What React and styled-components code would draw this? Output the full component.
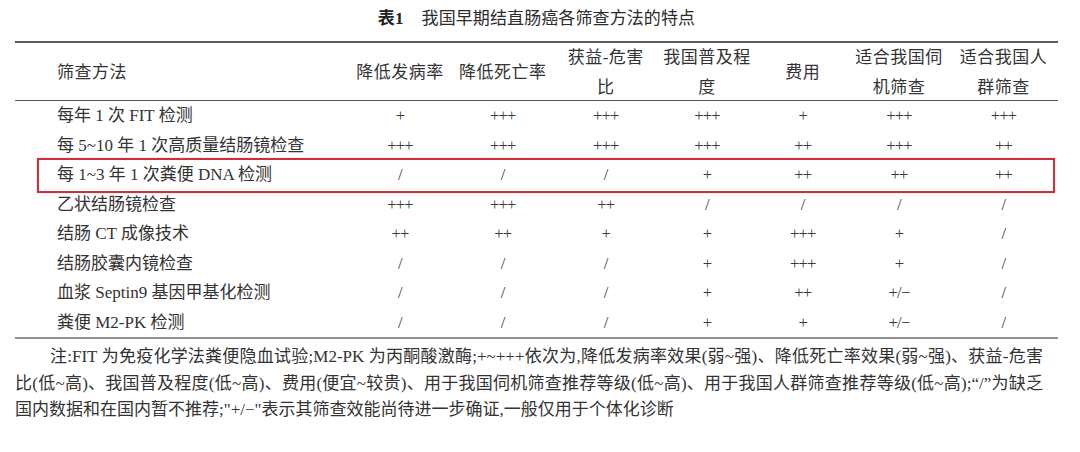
import styled, { createGlobalStyle } from "styled-components";

const GlobalStyle = createGlobalStyle`
  html, body {
    margin: 0;
    padding: 0;
    background: #ffffff;
  }
  body {
    font-family: "Liberation Serif", "Noto Sans CJK SC", serif;
    color: #333333;
  }
`;

const COLS = "333.5px 103px 102.5px 103.5px 99px 92.5px 100px 109px";

const headers = [
  ["降低发病率"],
  ["降低死亡率"],
  ["获益-危害", "比"],
  ["我国普及程", "度"],
  ["费用"],
  ["适合我国伺", "机筛查"],
  ["适合我国人", "群筛查"],
];

const rows = [
  ["每年 1 次 FIT 检测", ["+", "+++", "+++", "+++", "+", "+++", "+++"]],
  ["每 5~10 年 1 次高质量结肠镜检查", ["+++", "+++", "+++", "+++", "++", "+++", "++"]],
  ["每 1~3 年 1 次粪便 DNA 检测", ["/", "/", "/", "+", "++", "++", "++"], true],
  ["乙状结肠镜检查", ["+++", "+++", "++", "/", "/", "/", "/"]],
  ["结肠 CT 成像技术", ["++", "++", "+", "+", "+++", "+", "/"]],
  ["结肠胶囊内镜检查", ["/", "/", "/", "+", "+++", "+", "/"]],
  ["血浆 Septin9 基因甲基化检测", ["/", "/", "/", "+", "++", "+/−", "/"]],
  ["粪便 M2-PK 检测", ["/", "/", "/", "+", "+", "+/−", "/"]],
];

const Page = styled.div`
  width: 1043px;
  padding: 0 22px 0 15px;
`;

const Caption = styled.div`
  height: 41px;
  display: flex;
  justify-content: center;
  align-items: center;
  padding-bottom: 8px;
  box-sizing: border-box;
  font-size: 17px;
  letter-spacing: 0.1px;
  color: #2b2b2b;
`;

const CaptionLabel = styled.span`
  font-weight: bold;
  margin-right: 18px;
  color: #222;
`;

const Table = styled.div`
  border-top: 2px solid #5a5a5a;
  border-bottom: 2px solid #8f8f8f;
`;

const HeadRow = styled.div`
  display: grid;
  grid-template-columns: ${COLS};
  height: 57px;
  align-items: center;
  border-bottom: 1.5px solid #555;
`;

const HeadCell = styled.div`
  font-size: 17px;
  line-height: 30px;
  letter-spacing: 0.5px;
  text-align: ${(p) => (p.$first ? "left" : "center")};
  padding-left: ${(p) => (p.$first ? "42px" : "0")};
`;

const BodyRow = styled.div`
  position: relative;
  display: grid;
  grid-template-columns: ${COLS};
  height: 29.5px;
  align-items: center;
`;

const MethodCell = styled.div`
  font-size: 17px;
  padding-left: 42px;
  white-space: nowrap;
  line-height: 29.5px;
`;

const MarkCell = styled.div`
  font-family: "Liberation Serif", serif;
  font-size: 16.5px;
  letter-spacing: -0.8px;
  text-align: center;
  color: #3a3a3a;
  line-height: 29.5px;
`;

const Highlight = styled.div`
  position: absolute;
  left: 22px;
  right: 3px;
  top: -2.5px;
  bottom: -3.5px;
  border: 2px solid #cf2f3d;
  box-shadow: 0 0 1px rgba(207, 47, 61, 0.5);
  pointer-events: none;
`;

const Notes = styled.div`
  width: 1028px;
  margin-top: 5px;
  font-size: 17px;
  line-height: 26.5px;
  color: #333;
`;

const NoteLine = styled.div`
  white-space: nowrap;
  text-indent: ${(p) => (p.$indent ? "35px" : "0")};
  text-align: ${(p) => (p.$full ? "justify" : "left")};
  text-align-last: ${(p) => (p.$full ? "justify" : "left")};
  ${(p) => p.$full && "white-space: normal;"}
`;

export default function App() {
  return (
    <>
      <GlobalStyle />
      <Page>
        <Caption>
          <CaptionLabel>表1</CaptionLabel>
          我国早期结直肠癌各筛查方法的特点
        </Caption>
        <Table>
          <HeadRow>
            <HeadCell $first>筛查方法</HeadCell>
            {headers.map((h, i) => (
              <HeadCell key={i}>
                {h[0]}
                {h[1] && (
                  <>
                    <br />
                    {h[1]}
                  </>
                )}
              </HeadCell>
            ))}
          </HeadRow>
          {rows.map(([name, marks, marked], i) => (
            <BodyRow key={i}>
              <MethodCell>{name}</MethodCell>
              {marks.map((m, j) => (
                <MarkCell key={j}>{m}</MarkCell>
              ))}
              {marked && <Highlight />}
            </BodyRow>
          ))}
        </Table>
        <Notes>
          <NoteLine $indent $full>
            注:FIT 为免疫化学法粪便隐血试验;M2-PK 为丙酮酸激酶;+~+++依次为,降低发病率效果(弱~强)、降低死亡率效果(弱~强)、获益-危害
          </NoteLine>
          <NoteLine $full>
            比(低~高)、我国普及程度(低~高)、费用(便宜~较贵)、用于我国伺机筛查推荐等级(低~高)、用于我国人群筛查推荐等级(低~高);“/”为缺乏
          </NoteLine>
          <NoteLine>
            国内数据和在国内暂不推荐;"+/−"表示其筛查效能尚待进一步确证,一般仅用于个体化诊断
          </NoteLine>
        </Notes>
      </Page>
    </>
  );
}
